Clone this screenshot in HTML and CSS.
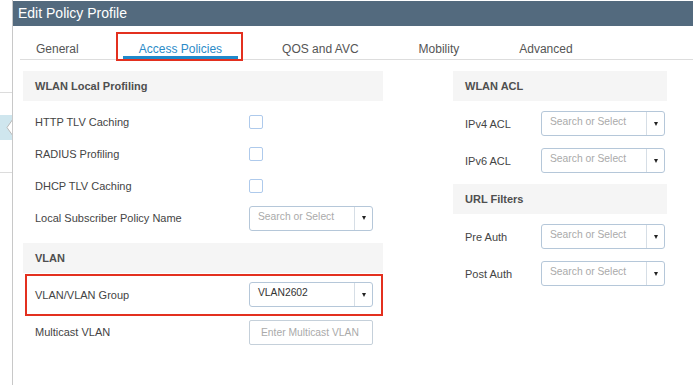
FILE: index.html
```html
<!DOCTYPE html>
<html lang="en">
<head>
  <meta charset="UTF-8" />
  <title>Edit Policy Profile</title>
  <link rel="stylesheet" href="styles.css">
</head>
<body>
  <div class="page">
    <!-- panel behind the modal -->
    <aside class="side">
      <div class="side-line top"></div>
      <div class="side-tab">
        <svg width="7" height="17" viewBox="0 0 7 17"><polyline points="7,0 1,8.5 7,17" fill="#fff" stroke="#b9b9b9" stroke-width="1"/></svg>
      </div>
      <div class="side-line bottom"></div>
    </aside>

    <main class="modal">
      <div class="modal-title">Edit Policy Profile</div>

      <nav class="tabs">
        <span class="tab">General</span>
        <span class="tab active marked">Access Policies</span>
        <span class="tab">QOS and AVC</span>
        <span class="tab">Mobility</span>
        <span class="tab">Advanced</span>
      </nav>

      <div class="content">
        <section class="col col-left">
          <div class="group-title">WLAN Local Profiling</div>
          <div class="row">
            <label>HTTP TLV Caching</label>
            <span class="check"></span>
          </div>
          <div class="row">
            <label>RADIUS Profiling</label>
            <span class="check"></span>
          </div>
          <div class="row">
            <label>DHCP TLV Caching</label>
            <span class="check"></span>
          </div>
          <div class="row">
            <label>Local Subscriber Policy Name</label>
            <div class="select"><span class="value placeholder">Search or Select</span><span class="caret"></span></div>
          </div>

          <div class="group-title spaced">VLAN</div>
          <div class="row tall marked">
            <label>VLAN/VLAN Group</label>
            <div class="select"><span class="value">VLAN2602</span><span class="caret"></span></div>
          </div>
          <div class="row">
            <label>Multicast VLAN</label>
            <div class="text-input placeholder">Enter Multicast VLAN</div>
          </div>
        </section>

        <section class="col col-right">
          <div class="group-title">WLAN ACL</div>
          <div class="row">
            <label>IPv4 ACL</label>
            <div class="select"><span class="value placeholder">Search or Select</span><span class="caret"></span></div>
          </div>
          <div class="row">
            <label>IPv6 ACL</label>
            <div class="select"><span class="value placeholder">Search or Select</span><span class="caret"></span></div>
          </div>

          <div class="group-title spaced">URL Filters</div>
          <div class="row">
            <label>Pre Auth</label>
            <div class="select"><span class="value placeholder">Search or Select</span><span class="caret"></span></div>
          </div>
          <div class="row">
            <label>Post Auth</label>
            <div class="select"><span class="value placeholder">Search or Select</span><span class="caret"></span></div>
          </div>
        </section>
      </div>
    </main>
  </div>
</body>
</html>
```

FILE: styles.css
```css
* {
  box-sizing: border-box;
}

body {
  margin: 0;
  font-family: 'Liberation Sans', Arial, sans-serif;
  background: #ffffff;
  color: #444;
  overflow: hidden;
}

.page {
  display: flex;
  min-height: 100vh;
}

/* background panel on the left */
.side {
  width: 12px;
  flex-shrink: 0;
  display: flex;
  flex-direction: column;
}

.side-line {
  height: 1px;
  background: #dcdcdc;
}

.side-line.top {
  margin-top: 92px;
}

.side-line.bottom {
  margin-top: 32px;
}

.side-tab {
  margin-top: 22px;
  height: 25px;
  background: #cfe6ee;
  display: flex;
  align-items: center;
  justify-content: flex-end;
}

.side-tab svg {
  display: block;
  margin-right: -1px;
}

/* modal */
.modal {
  flex: 1;
  border-left: 1px solid #c8c8c8;
}

.modal-title {
  margin-top: 1px;
  height: 25px;
  background: #536a7e;
  color: #fff;
  font-size: 14px;
  line-height: 25px;
  padding-left: 5px;
}

.tabs {
  display: flex;
  gap: 28px;
  margin-left: 7px;
  height: 34px;
  border-bottom: 1px solid #dddddd;
}

.tab {
  position: relative;
  height: 33px;
  padding: 16px 16px 0;
  font-size: 12px;
  line-height: 14px;
  color: #555;
  border-bottom: 3px solid transparent;
}

.tab.active {
  color: #2b8bc8;
  border-bottom-color: #1f89cb;
}

/* red annotation boxes */
.marked::after {
  content: "";
  position: absolute;
  border: 2px solid #e3301f;
  pointer-events: none;
}

.tab.marked::after {
  left: -7px;
  right: -5px;
  top: 6px;
  bottom: -5px;
}

.content {
  display: flex;
  gap: 70px;
  padding: 11px 0 0 10px;
}

.col-left {
  width: 360px;
}

.col-right {
  width: 214px;
}

.group-title {
  height: 30px;
  line-height: 30px;
  padding-left: 12px;
  background: #f5f5f5;
  font-size: 11px;
  font-weight: bold;
  color: #4f4f4f;
  margin-bottom: 5px;
}

.col-right .group-title {
  margin-bottom: 4px;
}

.col-left .group-title.spaced {
  margin-top: 9px;
  margin-bottom: 0;
}

.col-right .group-title.spaced {
  margin-top: 5px;
}

.row {
  position: relative;
  display: grid;
  align-items: center;
  padding-left: 12px;
  font-size: 11px;
}

.col-left .row {
  grid-template-columns: 214px 124px;
  height: 32px;
}

.col-right .row {
  grid-template-columns: 76px 124px;
  height: 37px;
}

.col-left .row.tall {
  height: 43px;
}

.row.marked::after {
  left: 2px;
  right: 0;
  top: 1px;
  bottom: 0;
}

.row label {
  color: #444;
}

.check {
  width: 14px;
  height: 14px;
  border: 1px solid #aecaec;
  border-radius: 2px;
  background: #fff;
}

.select {
  display: flex;
  height: 25px;
  border: 1px solid #b5c7d9;
  border-radius: 3px;
  background: #fff;
}

.select .value {
  flex: 1;
  padding-left: 8px;
  font-size: 10.3px;
  line-height: 19px;
  color: #333;
}

.placeholder {
  color: #aaaaaa !important;
}

.caret {
  width: 18px;
  border-left: 1px solid #d6dee6;
  display: flex;
  align-items: center;
  justify-content: center;
}

.caret::before {
  content: "";
  border-left: 2.5px solid transparent;
  border-right: 2.5px solid transparent;
  border-top: 4px solid #222;
}

.text-input {
  height: 25px;
  border: 1px solid #c5d0da;
  border-radius: 2px;
  padding-left: 11px;
  font-size: 10.3px;
  line-height: 23px;
}
```
